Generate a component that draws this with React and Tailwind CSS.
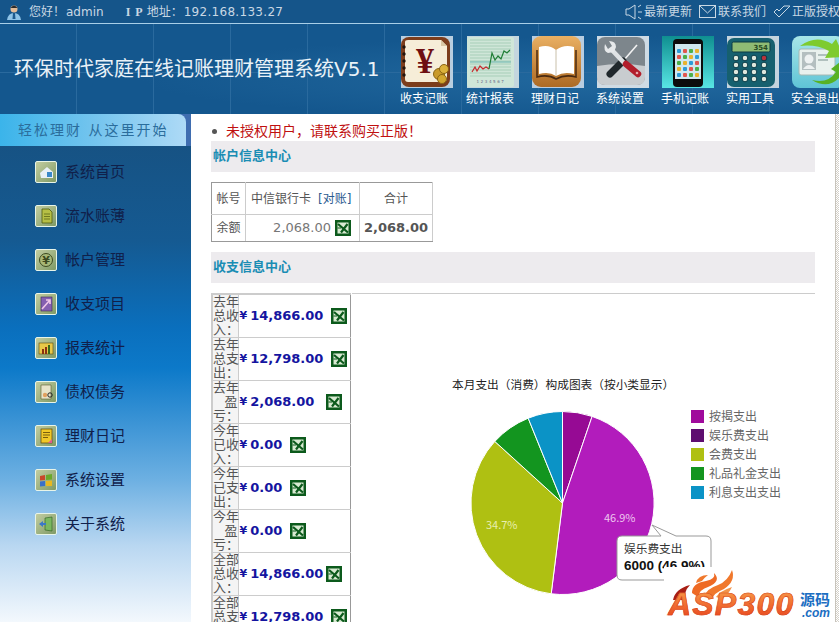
import React from 'react';

const cjk = "font-['DejaVu_Sans','Noto_Sans_CJK_SC',sans-serif]";

// header tiles, 52x52 each
function LedgerIcon() {
  return (
    <svg viewBox="0 0 52 52" className="w-[52px] h-[52px] block">
      <rect width="52" height="52" fill="#b8cee0" />
      <rect x="0" y="1" width="49" height="50" rx="8" fill="#7c3d1c" />
      <path d="M4 6 Q4 4 7 4 H40 L46 10 V42 Q46 46 42 46 H7 Q4 46 4 43 Z" fill="#f6edd8" />
      <path d="M40 4 L40 10 H46 Z" fill="#d8c7a4" />
      {[11, 18, 25, 32, 39].map(y => <circle key={y} cx="3" cy={y} r="1.7" fill="#22140c" />)}
      <text x="24" y="37" textAnchor="middle" fontSize="36" fontWeight="700" fill="#6e0f12" fontFamily="Liberation Serif, serif">¥</text>
      <circle cx="38" cy="38" r="5.5" fill="#c99a2a" stroke="#8a6414" />
      <circle cx="43" cy="33" r="4.5" fill="#dcb23c" stroke="#8a6414" />
      <circle cx="41" cy="43" r="4.5" fill="#d2a630" stroke="#8a6414" />
    </svg>
  );
}

function ChartIcon() {
  return (
    <svg viewBox="0 0 52 52" className="w-[52px] h-[52px] block">
      <rect width="52" height="52" fill="#c4d6de" />
      <rect x="0" y="1" width="47" height="50" rx="2" fill="#cfe6d8" />
      {[4, 7, 10, 13, 16, 19, 22, 25, 28, 31, 34, 37, 40].map(y => (
        <line key={y} x1="3" x2="44" y1={y} y2={y} stroke="#8fbfa6" strokeWidth="0.6" />
      ))}
      <line x1="3" x2="44" y1="26" y2="26" stroke="#6db6b0" />
      <polyline points="5,36 8,31 10,35 13,30 16,33 19,31 22,33" fill="none" stroke="#c8282c" strokeWidth="1.2" />
      <polyline points="22,33 25,17 28,24 31,20 34,23 37,15 40,17 43,14" fill="none" stroke="#1f7d35" strokeWidth="1.2" />
      <text x="24" y="47" textAnchor="middle" fontSize="4" fill="#668" letterSpacing="1.6">1234567</text>
    </svg>
  );
}

function BookIcon() {
  return (
    <svg viewBox="0 0 52 52" className="w-[52px] h-[52px] block">
      <defs>
        <linearGradient id="bk" x1="0" y1="0" x2="0" y2="1">
          <stop offset="0" stopColor="#eab063" />
          <stop offset="1" stopColor="#ad6a24" />
        </linearGradient>
      </defs>
      <rect width="52" height="52" fill="#b9cde0" />
      <rect x="0" y="0" width="49" height="51" rx="9" fill="url(#bk)" />
      <path d="M7 38 V11 Q17 8 24 14 Q32 8 42 11 V38 Q32 35 24 40 Q17 35 7 38 Z" fill="#fff" />
      <path d="M24 14 V40" stroke="#c9c0aa" strokeWidth="1" />
      <path d="M5 14 V41 Q16 38 24 43 Q33 38 44 41 V14" fill="none" stroke="#4a2a10" strokeWidth="1.5" />
    </svg>
  );
}

function ToolsIcon() {
  return (
    <svg viewBox="0 0 52 52" className="w-[52px] h-[52px] block">
      <rect width="52" height="52" fill="#cfdbe4" />
      <rect x="0" y="1" width="48" height="48" rx="8" fill="#7d868c" />
      <path d="M0 30 Q24 26 48 30 V41 Q48 49 40 49 H8 Q0 49 0 41 Z" fill="#c8cccf" />
      <path d="M27 24 L40 9" stroke="#f2f2f2" strokeWidth="1.6" />
      <path d="M26 25 L13 38" stroke="#20282c" strokeWidth="7" strokeLinecap="round" />
      <path d="M14 13 L29 29" stroke="#dfe3e5" strokeWidth="4.5" />
      <path d="M8 8 L11 13 L15 10 L12 5 Q19 5 19 11 L17 16 L11 17 Q6 15 8 8 Z" fill="#e6e9eb" />
      <path d="M29 28 L41 38" stroke="#b21e2c" strokeWidth="6.5" strokeLinecap="round" />
      <circle cx="40" cy="37" r="1.3" fill="#e6a6aa" />
    </svg>
  );
}

function PhoneIcon() {
  return (
    <svg viewBox="0 0 52 52" className="w-[52px] h-[52px] block">
      <defs>
        <linearGradient id="ph" x1="0" y1="0" x2="0" y2="1">
          <stop offset="0" stopColor="#0f8f90" />
          <stop offset="1" stopColor="#58e6e4" />
        </linearGradient>
      </defs>
      <rect width="52" height="52" fill="url(#ph)" />
      <rect x="11" y="3" width="30" height="48" rx="4" fill="#0c0c0c" />
      <rect x="13" y="8" width="26" height="35" fill="#cfe8ef" />
      {[13, 19, 25, 31, 37].map((y, r) => [15, 21, 27, 33].map((x, c) => (
        <rect key={`${r}-${c}`} x={x} y={y} width="4" height="4" rx="1" fill={['#2c9bd8', '#e0574f', '#4bb04a', '#e8b22e'][(r + c) % 4]} />
      )))}
    </svg>
  );
}

function CalcIcon() {
  return (
    <svg viewBox="0 0 52 52" className="w-[52px] h-[52px] block">
      <rect width="52" height="52" fill="#c4d4de" />
      <rect x="0" y="2" width="48" height="49" rx="7" fill="#16606f" />
      <rect x="5" y="6" width="38" height="10" rx="1.5" fill="#8fbb74" stroke="#0c3a44" />
      <text x="41" y="14" textAnchor="end" fontSize="7" fill="#274a22" fontWeight="700">354</text>
      {[22, 29, 36, 43].map((y, r) => [9, 18, 27, 37].map((x, c) => (
        <circle key={`${r}-${c}`} cx={x} cy={y} r="2.8" fill={r === 0 && c === 3 ? '#b8323c' : '#dfe7dc'} stroke="#0a3c48" />
      )))}
    </svg>
  );
}

function ExitIcon() {
  return (
    <svg viewBox="0 0 52 52" className="w-[52px] h-[52px] block">
      <defs>
        <linearGradient id="ex" x1="0" y1="0" x2="0" y2="1">
          <stop offset="0" stopColor="#a7e6e8" />
          <stop offset="1" stopColor="#5fc4d6" />
        </linearGradient>
      </defs>
      <rect width="52" height="52" rx="8" fill="url(#ex)" />
      <rect x="7" y="13" width="36" height="26" rx="2" fill="#e9f1ee" stroke="#a4b8b4" />
      <rect x="10" y="16" width="14" height="18" fill="#b4bfc0" />
      <circle cx="17" cy="23" r="4.5" fill="#eef2f2" />
      <path d="M11 33 Q17 25 23 33 Z" fill="#eef2f2" />
      <path d="M26 19 H40 M26 24 H36" stroke="#9fb0ae" strokeWidth="1.5" />
      <path d="M8 10 Q24 -2 40 8 L44 3 L52 21 L33 22 L37 15 Q24 8 8 10 Z" fill="#7ecb2e" />
      <path d="M20 44 Q36 48 44 36 L39 33 L52 23 V47 L48 41 Q36 54 20 44 Z" fill="#58b224" />
    </svg>
  );
}

const tiles = [
  { label: '收支记账', Icon: LedgerIcon },
  { label: '统计报表', Icon: ChartIcon },
  { label: '理财日记', Icon: BookIcon },
  { label: '系统设置', Icon: ToolsIcon },
  { label: '手机记账', Icon: PhoneIcon },
  { label: '实用工具', Icon: CalcIcon },
  { label: '安全退出', Icon: ExitIcon },
];

// small sidebar glyphs, 16x16 inside the olive tile
const navGlyphs = {
  home: <><path d="M2 9 L9 3 L15 8 V14 H3 Z" fill="#e8f0f5" /><rect x="9" y="8" width="5" height="5" fill="#3a88c8" /></>,
  doc: <><path d="M4 1 H11 L14 4 V15 H4 Z" fill="#b6bf45" stroke="#4f5a10" strokeWidth="0.8" /><path d="M6 6 H12 M6 8.5 H12 M6 11 H12" stroke="#4f5a10" strokeWidth="0.7" /></>,
  yen: <><circle cx="8" cy="8" r="6.5" fill="#a8b878" stroke="#3c4a20" /><text x="8" y="12" textAnchor="middle" fontSize="11" fontWeight="700" fill="#3c4a20">¥</text></>,
  item: <><rect x="3" y="1" width="11" height="14" fill="#8560b0" stroke="#3a2a58" strokeWidth="0.6" /><path d="M4 13 L12 4 M8 4 H12 V8" stroke="#f0c8e8" strokeWidth="1.6" fill="none" /></>,
  chart: <><rect x="1" y="3" width="14" height="11" fill="#e8c848" stroke="#5a4a10" strokeWidth="0.6" /><rect x="4" y="9" width="2" height="5" fill="#8a3010" /><rect x="7" y="7" width="2" height="7" fill="#8a3010" /><rect x="10" y="5" width="2" height="9" fill="#3a6a18" /></>,
  debt: <><path d="M3 1 H13 V15 H3 Z" fill="#e8e4c8" stroke="#5a5a30" strokeWidth="0.6" /><circle cx="7" cy="11" r="2.2" fill="#e0a060" /><circle cx="12" cy="11" r="2.2" fill="none" stroke="#222" /></>,
  note: <><rect x="3" y="1" width="11" height="14" fill="#f0c828" stroke="#5a4408" strokeWidth="0.7" /><path d="M5 4.5 H12 M5 7 H12 M5 9.5 H10" stroke="#5a4408" strokeWidth="0.8" /><path d="M10 15 L14 11 V15 Z" fill="#e05a90" /></>,
  win: <><path d="M2 4 L7 3 V8 L2 8.5 Z" fill="#c8482a" /><path d="M8 3 L14 2 V7.5 L8 8 Z" fill="#6aa82a" /><path d="M2 9.5 L7 9 V14 L2 14.5 Z" fill="#3a70c8" /><path d="M8 9 L14 8.5 V14 L8 14 Z" fill="#e8b820" /></>,
  door: <><path d="M7 2 L14 1 V15 L7 14 Z" fill="#7ab860" stroke="#2a5a20" strokeWidth="0.6" /><path d="M1 8 L5 5 V7 H8 V9 H5 V11 Z" fill="#3a78c8" /></>,
};

const navItems = [
  ['系统首页', 'home'],
  ['流水账薄', 'doc'],
  ['帐户管理', 'yen'],
  ['收支项目', 'item'],
  ['报表统计', 'chart'],
  ['债权债务', 'debt'],
  ['理财日记', 'note'],
  ['系统设置', 'win'],
  ['关于系统', 'door'],
];

function NavItem({ label, glyph }) {
  return (
    <div className="h-[44px] flex items-center pl-[35px] gap-[8px]">
      <div className="w-[22px] h-[22px] flex items-center justify-center rounded-[2px] border border-[#e8f4e8] bg-[linear-gradient(135deg,#c2cda0,#7f9a66)]">
        <svg viewBox="0 0 16 16" className="w-[16px] h-[16px]">{navGlyphs[glyph]}</svg>
      </div>
      <span className="text-[15px] leading-none text-[#10204a]">{label}</span>
    </div>
  );
}

function ExcelIcon({ className = '' }) {
  return (
    <svg viewBox="0 0 16 16" className={`inline-block w-[16px] h-[16px] shrink-0 ${className}`}>
      <rect width="16" height="16" fill="#0c5a1c" />
      <rect x="2.5" y="2.5" width="11" height="11" fill="#d9ead2" />
      <path d="M3 4 L13 12.5 M12.5 4 L6 12.5" stroke="#0c5a1c" strokeWidth="2.2" />
      <path d="M2.5 8 H6" stroke="#0c5a1c" strokeWidth="1" />
    </svg>
  );
}

const rows = [
  [['去年', '总收', '入：'], '14,866.00', 'ml-[8px]'],
  [['去年', '总支', '出：'], '12,798.00', 'ml-[8px]'],
  [['去年', '盈', '亏：'], '2,068.00', 'ml-[12px]'],
  [['今年', '已收', '入：'], '0.00', 'ml-[8px]'],
  [['今年', '已支', '出：'], '0.00', 'ml-[8px]'],
  [['今年', '盈', '亏：'], '0.00', 'ml-[8px]'],
  [['全部', '总收', '入：'], '14,866.00', 'ml-[3px]'],
  [['全部', '总支', '出：'], '12,798.00', 'ml-[8px]'],
];

const legend = [
  ['按揭支出', '#a00a9c'],
  ['娱乐费支出', '#5e0e70'],
  ['会费支出', '#afc012'],
  ['礼品礼金支出', '#13951f'],
  ['利息支出支出', '#0b93c6'],
];

// pie centre and slices, angles clockwise from 12 o'clock
const slices = [
  [0, 18.9, '#960a94'],
  [18.9, 187.1, '#b21cbc'],
  [187.1, 312.3, '#afc012'],
  [312.3, 338, '#13951f'],
  [338, 360, '#0b93c6'],
];

function slicePath(from, to, cx, cy, r) {
  const pt = a => {
    const t = (a * Math.PI) / 180;
    return `${(cx + r * Math.sin(t)).toFixed(1)} ${(cy - r * Math.cos(t)).toFixed(1)}`;
  };
  return `M${cx} ${cy} L${pt(from)} A${r} ${r} 0 ${to - from > 180 ? 1 : 0} 1 ${pt(to)} Z`;
}

function PieChart() {
  const font = 'Noto Sans CJK SC, sans-serif';
  return (
    <svg viewBox="0 0 464 329" className="w-[464px] h-[329px] block" fontFamily={font}>
      <text x="100" y="95" fontSize="11.7" fill="#222">本月支出（消费）构成图表（按小类显示）</text>
      {slices.map(([a, b, c]) => (
        <path key={a} d={slicePath(a, b, 210.5, 209, 91.5)} fill={c} stroke="#fff" strokeWidth="1" />
      ))}
      <text x="252" y="228" fontSize="11" fill="#eec8f0">46.9%</text>
      <text x="134" y="235" fontSize="11" fill="#e8efb0">34.7%</text>
      {legend.map(([name, color], i) => (
        <g key={name}>
          <rect x="339" y={116 + i * 19} width="13" height="13" fill={color} />
          <text x="357" y={127 + i * 19} fontSize="12" fill="#666">{name}</text>
        </g>
      ))}
      <path
        d="M270 242 H309 L300 231 L324 242 H354 Q359 242 359 247 V281 Q359 286 354 286 H270 Q265 286 265 281 V247 Q265 242 270 242 Z"
        fill="#fff"
        stroke="#999"
      />
      <text x="272" y="259" fontSize="11.7" fill="#333">娱乐费支出</text>
      <text x="272" y="276" fontSize="13.5" fontWeight="700" fill="#111" fontFamily="Liberation Sans, sans-serif">6000 (46.9%)</text>
    </svg>
  );
}

function Watermark() {
  return (
    <div className="absolute right-[4px] bottom-0 w-[171px] h-[55px] bg-white overflow-hidden">
      <svg viewBox="0 0 70 34" className="absolute left-[6px] top-0 w-[70px] h-[34px]">
        <path d="M3 33 Q5 22 20 18 Q13 25 16 33 Z" fill="#a81e14" />
        <path d="M22 26 Q22 16 36 14 Q46 12 44 6 Q52 14 38 20 Q30 22 28 30 Z" fill="#ee6a24" />
        <path d="M26 16 Q28 8 38 8 Q34 11 32 14 Z" fill="#f0782c" />
        <path d="M34 30 Q36 22 48 18 Q58 14 62 3 Q66 14 54 22 Q44 26 42 32 Z" fill="#f0782c" />
        <path d="M46 30 Q50 24 62 20 Q58 28 52 32 Z" fill="#f2944a" />
      </svg>
      <div className="absolute left-[4px] bottom-[2px] text-[32px] leading-[32px] font-bold italic tracking-[1.2px] font-['Liberation_Sans',sans-serif] text-transparent bg-clip-text bg-[linear-gradient(180deg,#f9a04a,#e8401c)] [-webkit-text-stroke:0.6px_#d8481c]">
        ASP300
      </div>
      <div className="absolute left-[136px] top-[24px] text-[15px] leading-[15px] font-bold text-[#1b6ec2] font-['Noto_Sans_CJK_SC',sans-serif]">源码</div>
      <div className="absolute left-[138px] top-[40px] text-[12px] leading-[12px] font-bold italic text-[#1b6ec2] font-['Liberation_Sans',sans-serif]">.com</div>
    </div>
  );
}

export default function App() {
  return (
    <div className={`relative w-[839px] h-[622px] overflow-hidden flex flex-col bg-white ${cjk}`}>
      {/* top strip */}
      <div className="h-[24px] shrink-0 flex items-center border-b border-[#a9cfe8] bg-[#15558a] text-[12px] text-[#c9d8e4]">
        <svg viewBox="0 0 16 16" className="w-[16px] h-[16px] ml-[6px]">
          <circle cx="8" cy="5" r="3.5" fill="#e4bc98" />
          <path d="M4.5 4 Q8 -1 11.5 4 Z" fill="#2a2a2a" />
          <path d="M1 16 Q2 9 8 9 Q14 9 15 16 Z" fill="#8fc4e8" />
          <path d="M7 9 H9 L9.5 15 H6.5 Z" fill="#1d5a8e" />
        </svg>
        <span className="ml-[7px]">您好！</span>
        <span className="ml-[1px]">admin</span>
        <span className="ml-[22px] font-bold font-['Liberation_Serif','Noto_Sans_CJK_SC',serif] tracking-[1px]">I P</span>
        <span className="ml-[3px]">地址：</span>
        <span className="ml-[1px] tracking-[0.3px]">192.168.133.27</span>
        <div className="ml-auto flex items-center gap-[7px] whitespace-nowrap mr-[-1px]">
          <span className="flex items-center gap-[1px]">
            <svg viewBox="0 0 18 16" className="w-[18px] h-[16px]" fill="none" stroke="#c9d8e4">
              <path d="M1 5 H4 L10 1 V15 L4 11 H1 Z" />
              <path d="M13 3 L16 1 M13 8 H17 M13 13 L16 15" />
            </svg>
            最新更新
          </span>
          <span className="flex items-center gap-[1px]">
            <svg viewBox="0 0 18 14" className="w-[18px] h-[14px]" fill="none" stroke="#c9d8e4">
              <rect x="0.5" y="0.5" width="16" height="12" />
              <path d="M1 1 L8.5 8 L16 1" />
            </svg>
            联系我们
          </span>
          <span className="flex items-center gap-[1px]">
            <svg viewBox="0 0 18 14" className="w-[18px] h-[14px]" fill="none" stroke="#c9d8e4">
              <path d="M1 7 L6 12 L17 1 L11 1 L6 6 L4 4 Z" />
            </svg>
            正版授权
          </span>
        </div>
      </div>

      {/* title and tiles */}
      <div className="h-[90px] shrink-0 flex items-start pl-[14px] bg-[#14578e] bg-[linear-gradient(180deg,transparent_48px,#2a6a9e_48px,#2a6a9e_49px,transparent_49px),repeating-linear-gradient(90deg,transparent_0,transparent_76px,#2a6a9e_76px,#2a6a9e_77px),radial-gradient(ellipse_at_75%_60%,#22699f,transparent_55%)]">
        <div className="w-[387px] shrink-0 pt-[31px] text-[20px] leading-[28px] text-[#eaf2f8] whitespace-nowrap">
          环保时代家庭在线记账理财管理系统<span>V5.1</span>
        </div>
        <div className="flex gap-[13px] pt-[12px] shrink-0">
          {tiles.map(({ label, Icon }) => (
            <div key={label} className="w-[52px] first:mr-[1px]">
              <Icon />
              <div className="mt-[3px] ml-[-1px] text-[12px] leading-[16px] text-white whitespace-nowrap">{label}</div>
            </div>
          ))}
        </div>
      </div>

      <div className="flex flex-1 min-h-0">
        {/* sidebar */}
        <div className="w-[191px] shrink-0 bg-[linear-gradient(180deg,#17507f_0%,#155a92_25%,#0a6fbd_42%,#0c79c9_50%,#6db0e2_72%,#b9d7f1_85%,#f3f8fd_100%)]">
          <div className="h-[32px] bg-[#3f6db0]">
            <div className="w-[186px] h-[32px] flex items-center pl-[18px] rounded-tr-[8px] bg-[linear-gradient(90deg,#3bb4ea,#73c4ee_50%,#aedaf6)] text-[14px] tracking-[2px] text-[#2b6d9c] whitespace-nowrap">
              轻松理财 从这里开始
            </div>
          </div>
          <div className="pt-[4px]">
            {navItems.map(([label, glyph]) => <NavItem key={label} label={label} glyph={glyph} />)}
          </div>
        </div>

        {/* main content */}
        <div className="flex-1 min-w-0 px-[20px] overflow-hidden">
          <div className="h-[27px] flex items-center text-[14px] text-[#c01010] pt-[7px]">
            <span className="w-[5px] h-[5px] ml-[1px] rounded-full bg-[#555]" />
            <span className="ml-[9px]">未授权用户，请联系购买正版！</span>
          </div>

          <div className="h-[31px] pl-[2px] pt-[7px] bg-[#edebee] text-[13px] leading-[16px] font-bold text-[#1a8db4]">帐户信息中心</div>

          <table className="mt-[10px] border-collapse text-[12px] text-[#555] border-r border-b border-[#999]">
            <tbody>
              <tr className="h-[32px]">
                <td className="w-[34px] border border-[#ccc] border-t-[#999] border-l-[#999] text-center">帐号</td>
                <td className="w-[114px] border border-[#ccc] border-t-[#999] pl-[5px] whitespace-nowrap">
                  中信银行卡<span className="ml-[7px] text-[#2a5a90]">[对账]</span>
                </td>
                <td className="w-[73px] border border-[#ccc] border-t-[#999] text-center">合计</td>
              </tr>
              <tr className="h-[27px]">
                <td className="border border-[#ccc] border-l-[#999] border-b-[#999] text-center">余额</td>
                <td className="border border-[#ccc] border-b-[#999] text-right pr-[8px]">
                  <span className="inline-flex items-center gap-[4px] text-[#777] text-[13px]">2,068.00 <ExcelIcon /></span>
                </td>
                <td className="border border-[#ccc] border-b-[#999] text-center font-bold text-[13px] text-[#555]">2,068.00</td>
              </tr>
            </tbody>
          </table>

          <div className="mt-[10px] h-[31px] pl-[2px] pt-[7px] bg-[#edebee] text-[13px] leading-[16px] font-bold text-[#1a8db4]">收支信息中心</div>

          <div className="mt-[10px] flex items-start">
            <table className="shrink-0 w-[140px] border-collapse table-fixed border-t-2 border-l-2 border-r border-[#ccc] border-r-[#999]">
              <tbody>
                {rows.map(([lines, value, gap], i) => (
                  <tr key={i} className="h-[43px] border-b border-[#ccc]">
                    <td className="w-[26px] bg-[#f4f4f4] border-r border-[#ccc] text-right text-[13px] leading-[14px] text-[#555] p-0 whitespace-nowrap">
                      {lines.map((l, j) => <div key={j}>{l}</div>)}
                    </td>
                    <td className="pl-[1px] pb-[5px] whitespace-nowrap">
                      <span className="inline-flex items-center text-[13px] font-bold text-[#1414a0]">
                        <span className="text-[11px] mr-[3px]">¥</span>
                        {value}
                        <ExcelIcon className={gap} />
                      </span>
                    </td>
                  </tr>
                ))}
              </tbody>
            </table>
            <div className="flex-1 min-w-0 ml-[1px] border-t border-[#ccc]">
              <PieChart />
            </div>
          </div>
        </div>

        {/* page scrollbar edge */}
        <div className="w-[4px] shrink-0 bg-[repeating-conic-gradient(#d4d0c8_0_25%,#ffffff_0_50%)] bg-[length:2px_2px] border-l border-[#c8c4bc]" />
      </div>

      <Watermark />
    </div>
  );
}
